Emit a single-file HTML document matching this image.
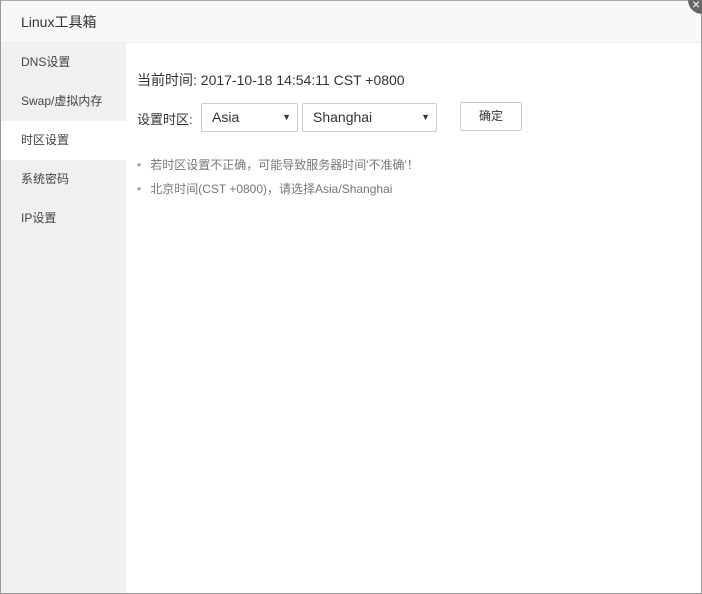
<!DOCTYPE html>
<html><head><meta charset="utf-8"><style>
*{margin:0;padding:0;box-sizing:border-box}
body{width:702px;height:594px;overflow:hidden;background:#fff;font-family:"Liberation Sans","Noto Sans CJK SC",sans-serif;position:relative}
.win{position:absolute;left:0;top:0;width:702px;height:594px;border:1px solid #999;border-top:1px solid #aaa;background:#fff}
.title{height:42px;background:#f8f8f8;border-bottom:1px solid #eee;font-size:14px;color:#333;line-height:42px;padding-left:20px}
.side{position:absolute;left:0;top:42px;width:125px;bottom:0;background:#f0f0f0}
.side div{height:39px;line-height:39px;padding-left:20px;font-size:12px;color:#444}
.side .on{background:#fff}
.main{position:absolute;left:136px;top:42px;font-size:12px;color:#333}
.t{position:absolute;top:27px;font-size:14px;white-space:nowrap}
.row{position:absolute;top:60px;white-space:nowrap;height:29px}
.sel{position:absolute;top:0;height:29px;border:1px solid #ccc;border-radius:2px;font-size:14px;line-height:27px;padding-left:10px}
.sel:after{content:"▼";position:absolute;right:6px;top:0;font-size:9px}
.btn{position:absolute;left:323px;top:-1px;width:62px;height:29px;border:1px solid #ccc;border-radius:2px;text-align:center;line-height:27px}
ul{position:absolute;top:114px;list-style:none;color:#777;white-space:nowrap}
li{height:24px;line-height:16px}
li:before{content:"•";color:#999;margin-right:9px}
.x{position:absolute;right:-14px;top:-14px;width:28px;height:28px;border-radius:50%;background:#666;color:#fff;font-size:14px}
.x span{position:absolute;left:4px;top:12px;line-height:12px}
</style></head><body>
<div class="win">
<div class="title">Linux工具箱</div>
<div class="side"><div>DNS设置</div><div>Swap/虚拟内存</div><div class="on">时区设置</div><div>系统密码</div><div>IP设置</div></div>
<div class="main">
<div class="t">当前时间: 2017-10-18 14:54:11 CST +0800</div>
<div class="row"><span style="position:absolute;top:6px;font-size:13px">设置时区:</span>
<div class="sel" style="left:64px;width:97px">Asia</div>
<div class="sel" style="left:165px;width:135px">Shanghai</div>
<div class="btn">确定</div></div>
<ul><li>若时区设置不正确，可能导致服务器时间'不准确'！</li><li>北京时间(CST +0800)，请选择Asia/Shanghai</li></ul>
</div>
</div>
<div class="x"><span>×</span></div>
</body></html>
